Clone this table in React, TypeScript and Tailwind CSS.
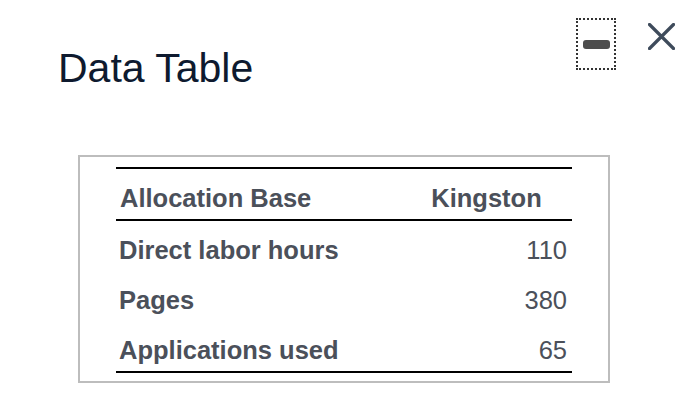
import React from "react";

const rows = [
  { label: "Direct labor hours", value: "110" },
  { label: "Pages", value: "380" },
  { label: "Applications used", value: "65" },
];

export default function App() {
  return (
    <div className="w-[700px] h-[411px] bg-white flex flex-col font-['Liberation_Sans',Arial,sans-serif]">
      <div className="flex items-start">
        <h2 className="ml-[58px] mt-[44px] text-[41px] leading-[48px] text-[#0e1a2f] font-normal">
          Data Table
        </h2>
        <div className="ml-auto mr-[25px] mt-[18px] flex items-start">
          <button className="w-[40px] h-[52px] border-2 border-dotted border-[#333] flex items-center justify-center">
            <span className="block w-[27px] h-[9px] rounded-[3px] bg-[#4d4d4d]" />
          </button>
          <button className="ml-[32px] mt-[5px] w-[27px] h-[27px] flex items-center justify-center">
            <svg width="27" height="27" viewBox="0 0 27 27">
              <path d="M1.5 1.5 L25.5 25.5 M25.5 1.5 L1.5 25.5" stroke="#3e4b5b" strokeWidth="3.2" strokeLinecap="round" fill="none" />
            </svg>
          </button>
        </div>
      </div>
      <div className="ml-[78px] mt-[63px] w-[532px] h-[228px] border-2 border-[#bdbdbd] px-[36px] pt-[10px] pb-[8px]">
        <div className="border-t-2 border-b-2 border-black text-[25.5px] leading-[30px] text-[#4b505a]">
          <div className="grid grid-cols-[1fr_171px] h-[52px] pt-[14px] border-b-2 border-black font-bold">
            <div className="pl-[4px]">Allocation Base</div>
            <div className="text-center">Kingston</div>
          </div>
          {rows.map((r) => (
            <div key={r.label} className="grid grid-cols-[1fr_171px] h-[50px] pt-[14px]">
              <div className="pl-[3px] font-bold">{r.label}</div>
              <div className="text-right pr-[5px]">{r.value}</div>
            </div>
          ))}
        </div>
      </div>
    </div>
  );
}
